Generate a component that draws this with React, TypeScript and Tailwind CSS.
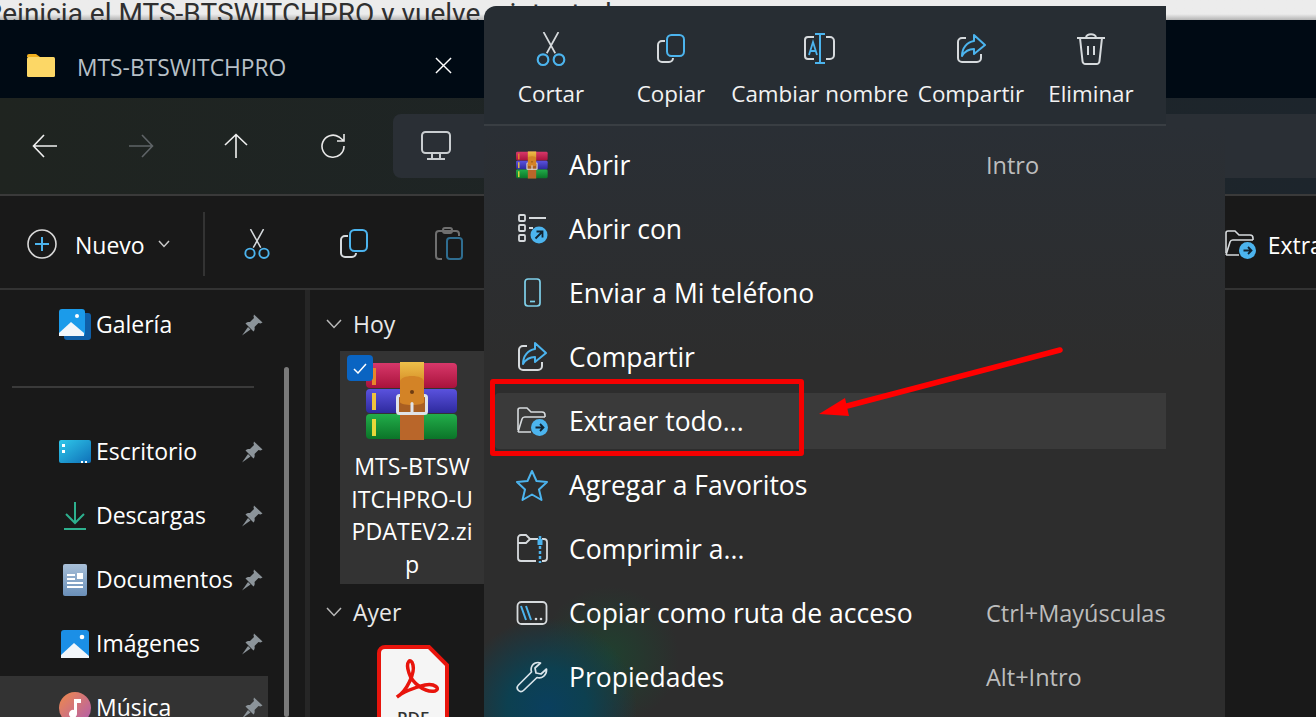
import React from "react";

const BLUE = "#4cb4ee";
const LINE = "#d6dadd";

// --- Outline icons ---
const Scissors = ({ size = 32 }: { size?: number }) => (
  <svg width={size} height={size + 2} viewBox="0 0 30 32" fill="none" strokeWidth="1.6" className="shrink-0">
    <path d="M8 0 L19 20 M22 0 L11 20" stroke={LINE} />
    <circle cx="7.5" cy="26" r="5" stroke={BLUE} strokeWidth="2" />
    <circle cx="22.5" cy="26" r="5" stroke={BLUE} strokeWidth="2" />
  </svg>
);

const Copy = () => (
  <svg width="30" height="30" viewBox="0 0 30 30" fill="none" strokeWidth="2" className="shrink-0">
    <path d="M9 7 H6 a4 4 0 0 0 -4 4 V24 a4 4 0 0 0 4 4 H13 a4 4 0 0 0 4 -4" stroke={LINE} />
    <rect x="11" y="1" width="17" height="21" rx="4.5" stroke={BLUE} />
  </svg>
);

const Clipboard = () => (
  <svg width="30" height="34" viewBox="0 0 30 34" fill="none" strokeWidth="2" className="shrink-0">
    <path d="M8 32 H5 a3 3 0 0 1 -3 -3 V7 a3 3 0 0 1 3 -3 H22 a3 3 0 0 1 3 3 V9" stroke="#6f6f6f" />
    <rect x="9" y="1" width="9" height="5" rx="2" stroke="#6f6f6f" />
    <rect x="13" y="11" width="15" height="21" rx="3" stroke="#2f6d90" />
  </svg>
);

const Rename = () => (
  <svg width="34" height="32" viewBox="0 0 34 32" fill="none" strokeWidth="2">
    <path d="M11 4 H5 a3 3 0 0 0 -3 3 V23 a3 3 0 0 0 3 3 H11" stroke={LINE} />
    <path d="M23 4 H27 a4 4 0 0 1 4 4 V22 a4 4 0 0 1 -4 4 H23" stroke={LINE} />
    <path d="M12 1 H22 M17 1 V30 M12 30 H22" stroke={BLUE} strokeWidth="2" />
    <path d="M6 22 L10 9 L14 22 M7.5 18 H12.5" stroke={BLUE} strokeWidth="1.8" />
  </svg>
);

const Share = ({ size = 30 }: { size?: number }) => (
  <svg width={size} height={size} viewBox="0 0 30 30" fill="none" strokeWidth="2">
    <path d="M10 4 H6 a4 4 0 0 0 -4 4 V24 a4 4 0 0 0 4 4 H21 a4 4 0 0 0 4 -4 V20" stroke={LINE} />
    <path d="M18 1 L29 11 L18 20 V15 C13 15 9 17 6 22 C6 14 11 8 18 7 Z" stroke={BLUE} strokeLinejoin="round" />
  </svg>
);

const Trash = () => (
  <svg width="30" height="32" viewBox="0 0 30 32" fill="none" stroke={LINE} strokeWidth="2">
    <path d="M1 5 H29 M10 5 C10 0 20 0 20 5" />
    <path d="M4 5 L6.500 28 a3 3 0 0 0 3 3 H20.500 a3 3 0 0 0 3 -3 L26 5" />
    <path d="M12 13 V22 M18 13 V22" />
  </svg>
);

const ArrowBadge = ({ cx, cy, r, up }: { cx: number; cy: number; r: number; up?: boolean }) => (
  <g>
    <circle cx={cx} cy={cy} r={r} fill={BLUE} />
    {up ? (
      <path
        d={`M${cx - 3.5} ${cy + 3.5} L${cx + 3.5} ${cy - 3.5} M${cx - 2.5} ${cy - 3.5} H${cx + 3.5} V${cy + 2.5}`}
        stroke="#12222e"
        strokeWidth="1.8"
        fill="none"
      />
    ) : (
      <path
        d={`M${cx - 4} ${cy} H${cx + 4} M${cx + 0.5} ${cy - 3.5} L${cx + 4} ${cy} L${cx + 0.5} ${cy + 3.5}`}
        stroke="#12222e"
        strokeWidth="1.8"
        fill="none"
      />
    )}
  </g>
);

const ExtractIcon = () => (
  <svg width="32" height="30" viewBox="0 0 32 30" fill="none" strokeWidth="1.6" className="shrink-0">
    <path d="M2 24 V4 a2 2 0 0 1 2 -2 H11 L15 6 H26 a3 3 0 0 1 3 3 V11" stroke={LINE} />
    <path d="M2 26 L6 13 a3 3 0 0 1 3 -2 H29 M2 26 H15" stroke={LINE} />
    <ArrowBadge cx={23.500} cy={21.500} r={8.500} />
  </svg>
);

const OpenWith = () => (
  <svg width="32" height="30" viewBox="0 0 32 30" fill="none" stroke={LINE} strokeWidth="1.8">
    <rect x="3" y="1" width="6" height="6" rx="1" />
    <rect x="3" y="11" width="6" height="6" rx="1" />
    <rect x="3" y="21" width="6" height="6" rx="1" />
    <path d="M13 4 H30 M13 14 H17" />
    <g stroke="none">
      <ArrowBadge cx={23} cy={21} r={8.500} up />
    </g>
  </svg>
);

const Phone = () => (
  <svg width="32" height="32" viewBox="0 0 32 32" fill="none" stroke="#7fd0ea" strokeWidth="1.700">
    <rect x="9" y="2" width="15" height="27" rx="3" />
    <path d="M14 24.500 H19" />
  </svg>
);

const Star = () => (
  <svg width="34" height="32" viewBox="0 0 34 32" fill="none" stroke={BLUE} strokeWidth="2" strokeLinejoin="round">
    <path d="M17 2 L21.500 12 L32 13 L24 20.500 L26.500 31 L17 25.500 L7.500 31 L10 20.500 L2 13 L12.500 12 Z" />
  </svg>
);

const ZipFolder = () => (
  <svg width="32" height="30" viewBox="0 0 32 30" fill="none" strokeWidth="1.800">
    <path d="M22 5 H14 L10 1 H5 a3 3 0 0 0 -3 3 V24 a3 3 0 0 0 3 3 H20 M2 9 H10 L14 5" stroke={LINE} />
    <path d="M26 5 H28 a3 3 0 0 1 3 3 V24 a3 3 0 0 1 -3 3 H26" stroke={LINE} />
    <path d="M24 2 V29" stroke={BLUE} strokeWidth="2.500" strokeDasharray="3 2" />
    <rect x="21.500" y="5" width="5" height="6" fill={BLUE} />
  </svg>
);

const PathIcon = () => (
  <svg width="32" height="26" viewBox="0 0 32 26" fill="none" strokeWidth="1.800">
    <rect x="1.500" y="2" width="29" height="22" rx="4" stroke={LINE} />
    <path d="M5 6 L10 20 M10 6 L15 20" stroke={BLUE} strokeWidth="2" />
    <circle cx="20" cy="19" r="1.300" fill={LINE} stroke="none" />
    <circle cx="25" cy="19" r="1.300" fill={LINE} stroke="none" />
  </svg>
);

const WrenchIcon = () => (
  <svg width="32" height="32" viewBox="0 0 32 32" fill="none" stroke="#d9e4ea" strokeWidth="1.700" strokeLinejoin="round">
    <path d="M22 1.500 C17 1.500 14 6 15.500 11 L2.500 24 C0.500 26 1 28 2.500 29.500 C4 31 6 31 8 29 L21 16.500 C26 18 31 14 30.500 8 L25 13 L20 12 L19 7 L24.500 2 C24 1.700 23 1.500 22 1.500 Z" />
  </svg>
);

const Pin = () => (
  <svg width="22" height="22" viewBox="0 0 22 22" fill="#8c949a" className="shrink-0">
    <path d="M13 0.500 L21.500 8.500 L19.500 9.500 L17.500 9 L13.500 13 C14 15 13.500 16.500 12.500 17.500 L4.500 9.500 C6 8 7.500 7.800 9 8 L13 4 L12.500 2.500 Z" />
    <path d="M7 13 L1 21.500 L9.500 15.500 Z" />
  </svg>
);

// --- Winrar stack, used large in the file tile and small in the menu ---
const Winrar = ({ width, height }: { width: number; height: number }) => (
  <svg width={width} height={height} viewBox="0 0 92 78" className="shrink-0">
    <defs>
      <linearGradient id="rarRed" x1="0" y1="0" x2="0" y2="1">
        <stop offset="0" stopColor="#d8386a" />
        <stop offset="1" stopColor="#a8123c" />
      </linearGradient>
      <linearGradient id="rarBlue" x1="0" y1="0" x2="0" y2="1">
        <stop offset="0" stopColor="#5a52de" />
        <stop offset="1" stopColor="#2e2a9e" />
      </linearGradient>
      <linearGradient id="rarGreen" x1="0" y1="0" x2="0" y2="1">
        <stop offset="0" stopColor="#22ad4a" />
        <stop offset="1" stopColor="#0b7428" />
      </linearGradient>
      <linearGradient id="rarTop" x1="0" y1="0" x2="0" y2="1">
        <stop offset="0" stopColor="#eec04a" />
        <stop offset="1" stopColor="#d8922a" />
      </linearGradient>
    </defs>
    <rect x="0" y="1" width="91" height="25" rx="4" fill="url(#rarRed)" />
    <rect x="0" y="27" width="91" height="24" rx="4" fill="url(#rarBlue)" />
    <rect x="0" y="52" width="91" height="25" rx="4" fill="url(#rarGreen)" />
    <rect x="6" y="6" width="4" height="17" fill="#e8862a" />
    <rect x="6" y="31" width="4" height="17" fill="#efc23e" />
    <rect x="6" y="57" width="4" height="17" fill="#e7d83a" />
    <rect x="34" y="0" width="24" height="20" fill="url(#rarTop)" />
    <rect x="34" y="44" width="24" height="34" fill="#b9662a" />
    <rect x="31.500" y="33.500" width="29" height="18" rx="2" fill="#a95f22" stroke="#dfe3e8" strokeWidth="3" />
    <path d="M34 20 C34 12 58 12 58 20 V40 C58 44 34 44 34 40 Z" fill="#d38326" />
    <circle cx="46" cy="30" r="2" fill="#6e3c12" />
    <rect x="44.500" y="40" width="3" height="12" rx="1.500" fill="#dfe3e8" />
  </svg>
);

// --- Coloured sidebar icons ---
const Gallery = () => (
  <svg width="32" height="32" viewBox="0 0 32 32">
    <rect x="5" y="4" width="27" height="27" rx="3" fill="#0f5fa8" />
    <rect x="0" y="0" width="26" height="27" rx="3" fill="#1b9bea" />
    <path d="M0 24 L12 13 L25 24 V27 H0 Z" fill="#f2f6fa" />
    <circle cx="18" cy="7" r="2" fill="#fff" />
  </svg>
);

const Desktop = () => (
  <svg width="32" height="24" viewBox="0 0 32 24">
    <defs>
      <linearGradient id="deskFill" x1="0" y1="0" x2="1" y2="1">
        <stop offset="0" stopColor="#2fc8ea" />
        <stop offset="1" stopColor="#0f70b8" />
      </linearGradient>
    </defs>
    <rect width="32" height="23" rx="2" fill="url(#deskFill)" />
    <rect x="3" y="4" width="3" height="3" fill="#fff" />
    <rect x="3" y="10" width="3" height="3" fill="#fff" />
    <rect x="22" y="21" width="2" height="2" fill="#fff" />
    <rect x="26" y="21" width="2" height="2" fill="#fff" />
  </svg>
);

const Downloads = () => (
  <svg width="24" height="30" viewBox="0 0 24 30" fill="none" stroke="#2db08e" strokeWidth="2">
    <path d="M12 1 V22 M3 13 L12 22 L21 13 M1 28 H23" />
  </svg>
);

const Documents = () => (
  <svg width="24" height="32" viewBox="0 0 24 32">
    <defs>
      <linearGradient id="docFill" x1="0" y1="0" x2="0" y2="1">
        <stop offset="0" stopColor="#a8bfd8" />
        <stop offset="1" stopColor="#6a8fb8" />
      </linearGradient>
    </defs>
    <rect width="24" height="32" rx="2" fill="url(#docFill)" />
    <path d="M4 11 H12 M4 15 H12 M4 19 H20 M4 23 H20" stroke="#fff" strokeWidth="1.800" />
    <rect x="14" y="9" width="6" height="6" fill="#fff" />
  </svg>
);

const Images = () => (
  <svg width="28" height="28" viewBox="0 0 28 28">
    <rect width="28" height="28" rx="3" fill="#1b8fe6" />
    <path d="M0 25 L13 13 L28 26 V28 H0 Z" fill="#f2f6fa" />
    <circle cx="21" cy="7" r="2.300" fill="#fff" />
  </svg>
);

const Music = () => (
  <svg width="32" height="32" viewBox="0 0 32 32">
    <defs>
      <linearGradient id="musicFill" x1="0" y1="0" x2="1" y2="1">
        <stop offset="0" stopColor="#f08a4a" />
        <stop offset="1" stopColor="#b05cb0" />
      </linearGradient>
    </defs>
    <circle cx="16" cy="16" r="16" fill="url(#musicFill)" />
    <path d="M15 7 H22 V11 H18 V22 a4 4 0 1 1 -3 -4 Z" fill="#fff" />
  </svg>
);

const PdfFile = () => (
  <div className="relative w-[72px] h-[90px] shrink-0">
    <svg width="72" height="90" viewBox="0 0 72 90" className="block">
      <path
        d="M8 2 H52 L70 20 V82 a6 6 0 0 1 -6 6 H8 a6 6 0 0 1 -6 -6 V8 a6 6 0 0 1 6 -6 Z"
        fill="#f5f5f5"
        stroke="#e8140c"
        strokeWidth="4"
      />
      <path
        d="M20 52 C30 46 38 28 36 20 C34 12 28 16 32 28 C35 38 48 48 58 46 C64 44 58 38 48 40 C38 42 24 48 20 52 Z"
        fill="none"
        stroke="#e8140c"
        strokeWidth="3.500"
      />
    </svg>
    <div className="absolute left-0 right-0 top-[60px] text-center text-[#333] text-[17px] font-semibold">PDF</div>
  </div>
);

const Chevron = () => (
  <svg width="16" height="10" viewBox="0 0 16 10" fill="none" stroke="#b9b9b9" strokeWidth="1.500" className="shrink-0">
    <path d="M1 1 L8 8.500 L15 1" />
  </svg>
);

// --- Data ---
const sidebarItems = [
  { name: "Escritorio", icon: <Desktop /> },
  { name: "Descargas", icon: <Downloads /> },
  { name: "Documentos", icon: <Documents /> },
  { name: "Imágenes", icon: <Images /> },
];

const topActions = [
  { label: "Cortar", icon: <Scissors />, width: "w-[120px]" },
  { label: "Copiar", icon: <Copy />, width: "w-[120px]" },
  { label: "Cambiar nombre", icon: <Rename />, width: "w-[178px]" },
  { label: "Compartir", icon: <Share />, width: "w-[124px]" },
  { label: "Eliminar", icon: <Trash />, width: "w-[116px]" },
];

const menuItems = [
  { label: "Abrir", icon: <Winrar width={32} height={30} />, shortcut: "Intro" },
  { label: "Abrir con", icon: <OpenWith /> },
  { label: "Enviar a Mi teléfono", icon: <Phone /> },
  { label: "Compartir", icon: <Share /> },
  { label: "Extraer todo...", icon: <ExtractIcon />, active: true },
  { label: "Agregar a Favoritos", icon: <Star /> },
  { label: "Comprimir a...", icon: <ZipFolder /> },
  { label: "Copiar como ruta de acceso", icon: <PathIcon />, shortcut: "Ctrl+Mayúsculas+C" },
  { label: "Propiedades", icon: <WrenchIcon />, shortcut: "Alt+Intro" },
];

const fileNameLines = ["MTS-BTSW", "ITCHPRO-U", "PDATEV2.zi", "p"];

const SidebarRow = ({ name, icon, active }: { name: string; icon: React.ReactNode; active?: boolean }) => (
  <div className={`h-16 w-[268px] shrink-0 flex items-center ${active ? "bg-[#333333]" : ""}`}>
    <div className="w-[96px] pl-[59px] shrink-0">
      <div className="w-[32px] flex justify-center">{icon}</div>
    </div>
    <span className="text-[23px] text-white flex-1 -mt-[1px]">{name}</span>
    <div className="mr-[5px]">
      <Pin />
    </div>
  </div>
);

export default function App() {
  return (
    <div className="relative w-[1316px] h-[717px] overflow-hidden flex flex-col bg-[#191919] [font-family:'Open_Sans',sans-serif]">
      {/* page text behind the screenshot */}
      <div className="h-5 shrink-0 overflow-hidden bg-gradient-to-b from-[#ececec] from-70% to-[#b4b4b4]">
        <p className="-ml-[15px] -mt-[4px] whitespace-nowrap text-[28px] leading-[36px] text-[#303030] [font-family:Roboto,sans-serif]">
          Reinicia el MTS-BTSWITCHPRO y vuelve a intentarlo.
        </p>
      </div>

      {/* title bar */}
      <div className="h-[78px] shrink-0 bg-[#000a14] flex items-center pl-[27px] pt-3">
        <svg width="28" height="23" viewBox="0 0 28 23" className="shrink-0">
          <path d="M0 2 a2 2 0 0 1 2 -2 H9 L13 3 H0 Z" fill="#f2b01e" />
          <rect y="3" width="28" height="20" rx="1.500" fill="#fcd766" />
        </svg>
        <span className="ml-[22px] mt-[7px] text-[22.800px] text-[#b7c0c7]">MTS-BTSWITCHPRO</span>
        <svg width="17" height="17" viewBox="0 0 18 18" className="ml-[149px] shrink-0" stroke="#ffffff" strokeWidth="1.500">
          <path d="M1 1 L17 17 M17 1 L1 17" />
        </svg>
      </div>

      {/* navigation bar */}
      <div className="h-[96px] shrink-0 flex items-center bg-gradient-to-r from-[#1f2420] to-[#1d252c] border-b-2 border-[#3a3a3a] box-content">
        <div className="flex items-center pl-[32px] gap-[70px]">
          <svg width="26" height="24" viewBox="0 0 26 24" fill="none" stroke="#f0f0f0" strokeWidth="1.600">
            <path d="M25 12 H2 M12 1 L1.500 12 L12 23" />
          </svg>
          <svg width="26" height="24" viewBox="0 0 26 24" fill="none" stroke="#5f6467" strokeWidth="1.600">
            <path d="M1 12 H24 M14 1 L24.500 12 L14 23" />
          </svg>
          <svg width="24" height="26" viewBox="0 0 24 26" fill="none" stroke="#f0f0f0" strokeWidth="1.600">
            <path d="M12 25 V2 M1 12 L12 1.500 L23 12" />
          </svg>
          <svg width="26" height="26" viewBox="0 0 26 26" fill="none" stroke="#e8e8e8" strokeWidth="1.600" className="ml-[2px]">
            <path d="M24 13 A11 11 0 1 1 19 4 L24 8 M24 1 V8 H17" />
          </svg>
        </div>
        <div className="ml-[47px] flex-1 h-[64px] bg-[#2a2f35] rounded-l-lg flex items-center pl-[28px]">
          <svg width="30" height="30" viewBox="0 0 30 30" fill="none" stroke="#c9cdd0" strokeWidth="2">
            <rect x="1" y="1" width="28" height="21" rx="3.500" />
            <path d="M11 22 V28 M19 22 V28 M6 28 H24" />
          </svg>
        </div>
      </div>

      {/* command bar */}
      <div className="h-[88px] pt-[4px] shrink-0 flex items-center overflow-hidden border-b-2 border-[#333333] box-content bg-[#191919]">
        <svg width="30" height="30" viewBox="0 0 30 30" fill="none" className="ml-[27px] shrink-0" strokeWidth="1.600">
          <circle cx="15" cy="15" r="14" stroke="#d8d8d8" />
          <path d="M15 8 V22 M8 15 H22" stroke={BLUE} strokeWidth="2" />
        </svg>
        <span className="ml-[18px] mt-[2px] text-[23px] text-white shrink-0">Nuevo</span>
        <svg width="12" height="8" viewBox="0 0 12 8" fill="none" stroke="#c9c9c9" strokeWidth="1.500" className="ml-[13px] shrink-0">
          <path d="M1 1 L6 6.500 L11 1" />
        </svg>
        <div className="ml-[33px] w-[2px] h-16 bg-[#333333] shrink-0" />
        <div className="ml-[38px] shrink-0">
          <Scissors size={28} />
        </div>
        <div className="ml-[68px] shrink-0">
          <Copy />
        </div>
        <div className="ml-[65px] shrink-0">
          <Clipboard />
        </div>
        <div className="ml-[760px] shrink-0">
          <ExtractIcon />
        </div>
        <span className="ml-[12px] mt-[2px] text-[23px] text-white shrink-0 whitespace-nowrap">Extraer</span>
      </div>

      {/* main area */}
      <div className="flex-1 flex min-h-0">
        <aside className="relative w-[305px] shrink-0 overflow-hidden pt-[3px] flex flex-col">
          <SidebarRow name="Galería" icon={<Gallery />} />
          <div className="mt-[29px] ml-3 w-[242px] h-[2px] shrink-0 bg-[#3a3a3a]" />
          <div className="mt-[32px]" />
          {sidebarItems.map((item) => (
            <SidebarRow key={item.name} name={item.name} icon={item.icon} />
          ))}
          <SidebarRow name="Música" icon={<Music />} active />
          <div className="absolute left-[284px] top-[77px] bottom-0 w-[5px] rounded-full bg-[#7a7a7a]" />
        </aside>
        <div className="w-[5px] shrink-0 bg-[#262626]" />
        <main className="flex-1 overflow-hidden">
          <div className="flex items-center pl-[16px] h-[34px] mt-[17px]">
            <Chevron />
            <span className="ml-[11px] text-[23px] text-[#e8e8e8]">Hoy</span>
          </div>
          <div className="ml-[30px] mt-[10px] w-[144px] h-[233px] bg-[#333333] relative flex flex-col items-center pt-[11px]">
            <Winrar width={92} height={78} />
            <div className="absolute left-[7px] top-[4px] w-[26px] h-[26px] rounded bg-[#0a64c2] flex items-center justify-center">
              <svg width="14" height="11" viewBox="0 0 14 11" fill="none" stroke="#ffffff" strokeWidth="1.500">
                <path d="M1 6 L5 10 L13 1" />
              </svg>
            </div>
            <div className="mt-[10px] text-center text-[23.200px] leading-[32.600px] text-white whitespace-nowrap">
              {fileNameLines.map((line) => (
                <div key={line}>{line}</div>
              ))}
            </div>
          </div>
          <div className="flex items-center pl-[16px] h-[34px] mt-[11px]">
            <Chevron />
            <span className="ml-[11px] text-[23px] text-[#e8e8e8]">Ayer</span>
          </div>
          <div className="ml-[67px] mt-[16px]">
            <PdfFile />
          </div>
        </main>
      </div>

      {/* context menu floating over the window */}
      <div className="absolute left-[484px] top-[6px] bottom-0 w-[741px] flex flex-col">
        <div className="w-[682px] h-[118px] shrink-0 bg-[#272d33] rounded-tl-xl flex pl-[7px] pt-[25px]">
          {topActions.map((action) => (
            <div key={action.label} className={`${action.width} shrink-0 flex flex-col items-center`}>
              <div className="h-[36px] flex items-center">{action.icon}</div>
              <span className="mt-[10px] whitespace-nowrap text-[22.400px] text-[#f2f2f2]">{action.label}</span>
            </div>
          ))}
        </div>
        <div className="w-[682px] h-[2px] shrink-0 bg-[#393e43]" />
        <div className="flex-1 pt-[7px] bg-[radial-gradient(circle_at_63px_582px,#0a3f5e,#0d4050_40px,transparent_90px),radial-gradient(circle_at_125px_530px,#20402f,transparent_70px),linear-gradient(to_bottom,#2a2f35,#2d2d2d_40%)]">
          {menuItems.map((item) => (
            <div key={item.label} className="w-[682px] h-16 py-1 pl-[11px] overflow-hidden">
              <div className={`h-14 flex items-center pl-[19px] rounded-l ${item.active ? "bg-[#3a3a3a]" : ""}`}>
                <div className="w-[36px] shrink-0 flex justify-center">{item.icon}</div>
                <span className="ml-[19px] mt-[2px] w-[417px] shrink-0 text-[26.500px] text-white whitespace-nowrap">{item.label}</span>
                {item.shortcut && (
                  <span className="mt-[2px] text-[23.500px] text-[#bdbdbd] whitespace-nowrap">{item.shortcut}</span>
                )}
              </div>
            </div>
          ))}
        </div>
      </div>

      {/* red annotation */}
      <div className="absolute left-[490px] top-[379px] w-[314px] h-[77px] border-[5px] border-[#f50000] rounded-[3px]" />
      <svg className="absolute left-[815px] top-[340px]" width="255" height="85" viewBox="0 0 255 85" fill="#ff0000">
        <path d="M245 10 L32 66" stroke="#ff0000" strokeWidth="5.500" strokeLinecap="round" />
        <path d="M4 74 L30 58 L34 76 Z" />
      </svg>
    </div>
  );
}
